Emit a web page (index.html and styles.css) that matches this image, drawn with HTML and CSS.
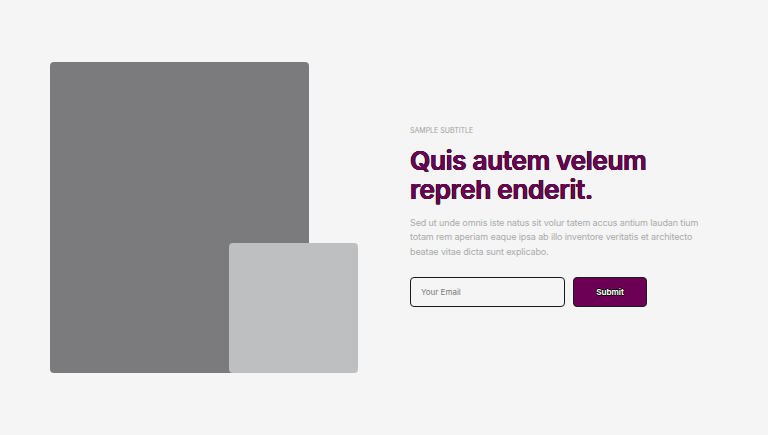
FILE: index.html
```html
<!DOCTYPE html>
<html>
<head>
<meta charset="utf-8">
<link rel="stylesheet" href="styles.css">
</head>
<body>
<section class="hero">
  <div class="media">
    <div class="media-main"></div>
    <div class="media-small"></div>
  </div>
  <div class="content">
    <p class="subtitle">SAMPLE SUBTITLE</p>
    <h1 class="title">Quis autem veleum repreh enderit.</h1>
    <p class="desc">Sed ut unde omnis iste natus sit volur tatem accus antium laudan tium totam rem aperiam eaque ipsa ab illo inventore veritatis et architecto beatae vitae dicta sunt explicabo.</p>
    <form class="signup">
      <input class="email" type="text" placeholder="Your Email">
      <button class="submit" type="button">Submit</button>
    </form>
  </div>
</section>
</body>
</html>
```
FILE: styles.css
```css
html, body {
  margin: 0;
  padding: 0;
  background: #f5f5f5;
  font-family: Inter, "Noto Sans", sans-serif;
}
.hero {
  display: flex;
  align-items: center;
  gap: 52px;
  padding: 62px 0 0 50px;
}
.media {
  position: relative;
  width: 308px;
  height: 311px;
  flex: none;
}
.media-main {
  width: 259px;
  height: 311px;
  background: #7b7b7d;
  border-radius: 4px;
}
.media-small {
  position: absolute;
  left: 179px;
  top: 181px;
  width: 129px;
  height: 130px;
  background: #bebfc1;
  border-radius: 4px;
}
.content {
  width: 300px;
  padding-bottom: 2px;
}
.subtitle {
  margin: 0 0 11px;
  font-size: 7px;
  color: #a0a0a0;
}
.title {
  margin: 0 0 12px;
  font-size: 26.3px;
  line-height: 29px;
  font-weight: 600;
  letter-spacing: -0.4px;
  color: #6b0055;
  text-shadow: -0.4px 0 #111, 0.4px 0 #111, 0 0.4px #111, 0 -0.4px #111;
}
.desc {
  margin: 0 0 18px;
  font-size: 9px;
  line-height: 14.5px;
  color: #aaaaaa;
  letter-spacing: -0.12px;
}
.signup {
  display: flex;
  gap: 8px;
}
.email {
  box-sizing: border-box;
  width: 155px;
  height: 30px;
  border: 1.5px solid #1a1a1a;
  border-radius: 4px;
  background: #f5f5f5;
  padding: 0 10px;
  font-family: inherit;
  font-size: 8px;
  outline: none;
}
.email::placeholder {
  color: #7a7a7a;
}
.submit {
  box-sizing: border-box;
  width: 74px;
  height: 30px;
  border: 1px solid #1a1a1a;
  border-radius: 4px;
  background: #6b0055;
  color: #fff;
  font-family: inherit;
  font-size: 8px;
  font-weight: 700;
  text-shadow: -0.6px 0 #000, 0.6px 0 #000, 0 0.6px #000, 0 -0.6px #000;
}
```
